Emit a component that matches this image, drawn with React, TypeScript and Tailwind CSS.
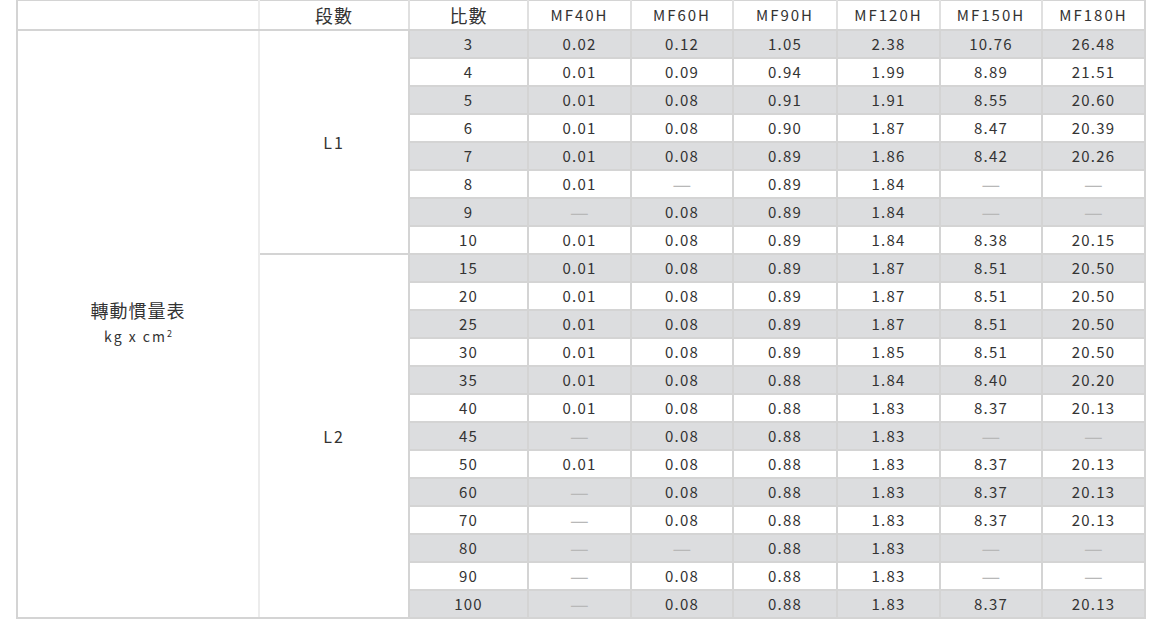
import React from 'react'

type Row = { ratio: number; vals: (string | null)[] }

const models = ['MF40H', 'MF60H', 'MF90H', 'MF120H', 'MF150H', 'MF180H']

const l1: Row[] = [
  { ratio: 3, vals: ['0.02', '0.12', '1.05', '2.38', '10.76', '26.48'] },
  { ratio: 4, vals: ['0.01', '0.09', '0.94', '1.99', '8.89', '21.51'] },
  { ratio: 5, vals: ['0.01', '0.08', '0.91', '1.91', '8.55', '20.60'] },
  { ratio: 6, vals: ['0.01', '0.08', '0.90', '1.87', '8.47', '20.39'] },
  { ratio: 7, vals: ['0.01', '0.08', '0.89', '1.86', '8.42', '20.26'] },
  { ratio: 8, vals: ['0.01', null, '0.89', '1.84', null, null] },
  { ratio: 9, vals: [null, '0.08', '0.89', '1.84', null, null] },
  { ratio: 10, vals: ['0.01', '0.08', '0.89', '1.84', '8.38', '20.15'] },
]

const l2: Row[] = [
  { ratio: 15, vals: ['0.01', '0.08', '0.89', '1.87', '8.51', '20.50'] },
  { ratio: 20, vals: ['0.01', '0.08', '0.89', '1.87', '8.51', '20.50'] },
  { ratio: 25, vals: ['0.01', '0.08', '0.89', '1.87', '8.51', '20.50'] },
  { ratio: 30, vals: ['0.01', '0.08', '0.89', '1.85', '8.51', '20.50'] },
  { ratio: 35, vals: ['0.01', '0.08', '0.88', '1.84', '8.40', '20.20'] },
  { ratio: 40, vals: ['0.01', '0.08', '0.88', '1.83', '8.37', '20.13'] },
  { ratio: 45, vals: [null, '0.08', '0.88', '1.83', null, null] },
  { ratio: 50, vals: ['0.01', '0.08', '0.88', '1.83', '8.37', '20.13'] },
  { ratio: 60, vals: [null, '0.08', '0.88', '1.83', '8.37', '20.13'] },
  { ratio: 70, vals: [null, '0.08', '0.88', '1.83', '8.37', '20.13'] },
  { ratio: 80, vals: [null, null, '0.88', '1.83', null, null] },
  { ratio: 90, vals: [null, '0.08', '0.88', '1.83', null, null] },
  { ratio: 100, vals: [null, '0.08', '0.88', '1.83', '8.37', '20.13'] },
]

const font = { fontFamily: '"Noto Sans CJK TC", "Noto Sans", sans-serif' }

export default function App() {
  const all = [...l1, ...l2]

  return (
    <div className="w-[1159px] h-[631px] bg-white pl-[16px] text-[#333]" style={font}>
      <table className="table-fixed border-collapse w-[1130px] text-[15px] leading-none">
        <colgroup>
          <col className="w-[242px]" />
          <col className="w-[150px]" />
          <col className="w-[119px]" />
          <col className="w-[103px]" />
          <col className="w-[102px]" />
          <col className="w-[104px]" />
          <col className="w-[103px]" />
          <col className="w-[102px]" />
          <col className="w-[103px]" />
        </colgroup>
        <thead>
          <tr className="h-[29px]">
            <th className="border-2 border-t border-[#d4d4d4] border-r-[#ececec] font-normal" />
            <th className="border-2 border-t border-[#d4d4d4] border-l-[#ececec] border-r-[#e0e0e0] font-normal text-[18px] tracking-[1px]">
              段數
            </th>
            <th className="border-2 border-t border-[#d4d4d4] border-x-[#e0e0e0] font-normal text-[18px] tracking-[1px]">
              比數
            </th>
            {models.map((m, i) => (
              <th
                key={m}
                className={`border-2 border-t border-[#d4d4d4] font-normal tracking-[2px] ${
                  i === models.length - 1 ? 'border-l-[#e0e0e0]' : 'border-x-[#e0e0e0]'
                }`}
              >
                {m}
              </th>
            ))}
          </tr>
        </thead>
        <tbody>
          {all.map((r, idx) => {
            const gray = idx % 2 === 0
            return (
              <tr key={r.ratio} className={`h-[28px] ${gray ? 'bg-[#dcdddf]' : 'bg-white'}`}>
                {idx === 0 && (
                  <td
                    rowSpan={all.length}
                    className="border-2 border-[#d4d4d4] border-r-[#ececec] bg-white text-center align-middle"
                  >
                    <div className="text-[18px] leading-[24px] tracking-[1px] mb-[3px] -mt-[2px]">轉動慣量表</div>
                    <div className="text-[14px] leading-[22px] tracking-[2px]">
                      kg x cm<sup className="text-[9px] relative -top-[5px] tracking-normal">2</sup>
                    </div>
                  </td>
                )}
                {idx === 0 && (
                  <td
                    rowSpan={l1.length}
                    className="border-2 border-[#ececec] border-r-[#d4d4d4] border-b-[#d4d4d4] bg-white text-center align-middle text-[16px] tracking-[2px]"
                  >
                    L1
                  </td>
                )}
                {idx === l1.length && (
                  <td
                    rowSpan={l2.length}
                    className="border-2 border-[#ececec] border-r-[#d4d4d4] border-b-[#d4d4d4] bg-white text-center align-middle text-[16px] tracking-[2px]"
                  >
                    L2
                  </td>
                )}
                <td className="border-2 border-[#d4d4d4] text-center tracking-[1.2px]">{r.ratio}</td>
                {r.vals.map((v, i) => (
                  <td key={i} className="border-2 border-[#d4d4d4] text-center tracking-[1.2px]">
                    {v ?? <span className="text-[#b8b8b8] tracking-normal text-[21px] leading-none">—</span>}
                  </td>
                ))}
              </tr>
            )
          })}
        </tbody>
      </table>
    </div>
  )
}
